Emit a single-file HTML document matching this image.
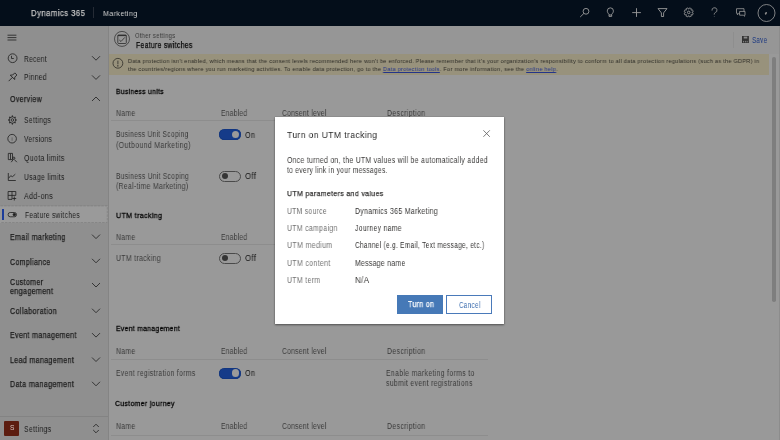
<!DOCTYPE html>
<html><head><meta charset="utf-8">
<style>
*{margin:0;padding:0;box-sizing:border-box}
html,body{width:780px;height:440px;overflow:hidden;background:#999999;font-family:"Liberation Sans",sans-serif;-webkit-font-smoothing:antialiased}
.t{position:absolute;white-space:nowrap;line-height:1;transform-origin:0 0;will-change:transform}
.b{position:absolute}
svg{position:absolute;overflow:visible}
.tog{position:absolute;width:22px;height:11px;border-radius:5.5px}
.on{background:#153b89;box-shadow:inset 0 0 0 0.6px #10337a}
.on::after{content:"";position:absolute;left:12.5px;top:1.8px;width:7.6px;height:7.6px;border-radius:50%;background:#9a9a9a}
.off{border:0.8px solid #4a4a4a}
.off::after{content:"";position:absolute;left:2px;top:1.9px;width:6px;height:6px;border-radius:50%;background:#353535}
.sep{position:absolute;left:111px;width:377px;height:1px;background:#8d8d8d}
</style></head><body>
<!-- top bar -->
<div class="b" style="left:0;top:0;width:780px;height:25.6px;background:#040e1a"></div>
<div class="b" style="left:93.4px;top:7.2px;width:1px;height:10.6px;background:#252b35"></div>
<svg style="left:0;top:0" width="780" height="26" fill="none" stroke="#9c9c9c" stroke-width="0.9">
 <circle cx="586" cy="11.3" r="2.9"/><path d="M583.9 13.4 L580.2 17"/>
 <path d="M609 14.3 C607.8 13 607.3 12 607.3 10.9 A3.05 3.05 0 0 1 613.4 10.9 C613.4 12 612.9 13 611.7 14.3 L611.7 16.4 L609 16.4 Z M609 15 H611.7"/>
 <path d="M636.5 8.2 V16.9 M632.2 12.6 H640.9"/>
 <path d="M658 8.6 H667 L663.6 12.9 V16.5 L661.4 16.5 V12.9 Z"/>
 <circle cx="688.7" cy="12.4" r="1.3"/>
 <path d="M691.90 12.50 L693.23 13.19 L692.46 15.05 L691.04 14.59 L690.89 14.74 L691.35 16.16 L689.49 16.93 L688.80 15.60 L688.60 15.60 L687.91 16.93 L686.05 16.16 L686.51 14.74 L686.36 14.59 L684.94 15.05 L684.17 13.19 L685.50 12.50 L685.50 12.30 L684.17 11.61 L684.94 9.75 L686.36 10.21 L686.51 10.06 L686.05 8.64 L687.91 7.87 L688.60 9.20 L688.80 9.20 L689.49 7.87 L691.35 8.64 L690.89 10.06 L691.04 10.21 L692.46 9.75 L693.23 11.61 L691.90 12.30 Z" stroke-width="0.75"/>
 <path d="M712 10.6 A2.5 2.5 0 1 1 715.2 12.6 C714.5 13 714.2 13.5 714.2 14.6" stroke-width="0.8"/><circle cx="714.2" cy="16.3" r="0.4" fill="#9c9c9c" stroke="none"/>
 <path d="M736.5 8.7 H744 V13.3 H738.8 L737.4 14.8 V13.3 H736.5 Z" stroke-width="0.8"/>
 <path d="M739.6 11.4 H745 V15.2 H744.6 V16.3 L743.3 15.2 H739.6 Z" fill="#040e1a" stroke-width="0.8"/>
 <circle cx="766.5" cy="13" r="8.5" stroke-width="0.8"/>
 <ellipse cx="765.9" cy="13.3" rx="0.9" ry="1.5" transform="rotate(30 765.9 13.3)" fill="#8a8a8a" stroke="none"/>
</svg>
<!-- sidebar -->
<div class="b" style="left:0;top:25.6px;width:108px;height:415px;background:#8f8f8f"></div>
<div class="b" style="left:108px;top:25.6px;width:1px;height:415px;background:#848484"></div>
<div class="b" style="left:0;top:205.7px;width:107.7px;height:17px;background:#9a9a9a"></div>
<svg style="left:0;top:0" width="109" height="440" fill="none" stroke="#787878" stroke-width="0.6">
 <path d="M0.5 205.9 H107.3 V222.5 H0.5" stroke-dasharray="2.6 1"/>
</svg>
<div class="b" style="left:1.9px;top:209px;width:2.2px;height:10.8px;background:#1c3c9a"></div>
<svg style="left:0;top:0" width="109" height="440" fill="none" stroke="#1e1e1e" stroke-width="0.8">
 <path d="M7.5 35.2 H16.4 M7.5 37.6 H16.4 M7.5 40 H16.4"/>
 <circle cx="12.6" cy="58.2" r="4.4"/><path d="M11.5 55.8 V58.5 H13.8"/>
 <g transform="translate(12.6,77.2) rotate(45)"><path d="M-1.5 -4.6 H1.5 V-1.6 L3.1 0.2 H-3.1 L-1.5 -1.6 Z"/><path d="M0 0.2 V5.6"/></g>
 <path d="M92 56.2 L96 60.2 L100 56.2 M92 75.4 L96 79.4 L100 75.4"/>
 <path d="M92 101 L96 97 L100 101"/>
 <circle cx="12.4" cy="120" r="3.2"/><circle cx="12.4" cy="120" r="1.3"/>
 <path d="M12.4 115.6 V116.8 M12.4 123.2 V124.4 M8 120 H9.2 M15.6 120 H16.8 M9.3 116.9 L10.1 117.7 M14.7 122.3 L15.5 123.1 M9.3 123.1 L10.1 122.3 M14.7 117.7 L15.5 116.9" stroke-width="1.2"/>
 <circle cx="12.1" cy="138.7" r="4.3"/><path d="M12.1 137.4 V140.8" stroke="#555" stroke-width="0.7"/>
 <path d="M8.3 153.4 H12.5 V159.6 H8.3 Z M10.5 153.6 V159.4"/>
 <circle cx="13.8" cy="158.2" r="1.1"/><path d="M11.2 162.2 L13.2 159.6 M14.4 159.6 L16.9 162.2"/>
 <path d="M8.3 173 V180.5 H15.8 M8.7 178.2 L10.6 175.8 L12.6 176.6 L15.3 174.2"/>
 <path d="M8.1 191.5 H15.8 V195.4 M8.1 191.5 V199.4 H12 M8.1 195.4 H15.8 M12 191.5 V199.4 M14.3 196.5 V200.5 M12.4 198.5 H16.2"/>
 <rect x="8.1" y="212.5" width="8.4" height="4.3" rx="2.1"/><circle cx="14.3" cy="214.6" r="1.2" fill="#1e1e1e"/>
 <path d="M92 234.6 L96 238.6 L100 234.6 M92 258.8 L96 262.8 L100 258.8 M92 283 L96 287 L100 283 M92 308.7 L96 312.7 L100 308.7 M92 333.1 L96 337.1 L100 333.1 M92 357.5 L96 361.5 L100 357.5 M92 381.8 L96 385.8 L100 381.8"/>
 <path d="M93.2 427 L96 424.2 L98.8 427 M93.2 430 L96 432.8 L98.8 430"/>
</svg>
<div class="b" style="left:0;top:415.5px;width:108px;height:1px;background:#838383"></div>
<div class="b" style="left:4.3px;top:421px;width:15px;height:14.8px;background:#5c1d10;border-radius:1px"></div>
<div class="t" style="left:9.8px;top:425.2px;font-size:6.6px;color:#d8c8c4">S</div>
<!-- header -->
<div class="b" style="left:109px;top:25.6px;width:671px;height:28.2px;background:#969696"></div>
<svg style="left:0;top:0" width="780" height="60" fill="none" stroke="#2a2a2a" stroke-width="0.7">
 <circle cx="122" cy="38.9" r="7.5"/>
 <rect x="117.8" y="35" width="8.5" height="8.5" rx="0.8" stroke-width="0.8"/><path d="M117.8 35.6 H126.3" stroke-width="1"/>
 <path d="M119.3 40 L121 41.5 L124.8 37.4" stroke-width="0.8"/>
</svg>
<div class="b" style="left:732.8px;top:32.3px;width:1px;height:15.6px;background:#8e8e8e"></div>
<svg style="left:0;top:0" width="780" height="60">
 <rect x="742" y="36" width="6.9" height="7" fill="#333"/>
 <rect x="743.7" y="36.6" width="3.6" height="1.9" fill="#8a8a8a"/>
 <rect x="743.1" y="40.9" width="0.9" height="1.5" fill="#8a8a8a"/><rect x="744.9" y="40.9" width="0.9" height="1.5" fill="#8a8a8a"/><rect x="746.7" y="40.9" width="0.9" height="1.5" fill="#8a8a8a"/>
</svg>
<!-- banner -->
<div class="b" style="left:109px;top:53.8px;width:660px;height:20.8px;background:#98927c"></div>
<svg style="left:0;top:0" width="780" height="80" fill="none" stroke="#2e2d28" stroke-width="0.8">
 <circle cx="117.9" cy="63.3" r="4.9"/><path d="M117.9 60.6 V64.3"/><circle cx="117.9" cy="65.9" r="0.3" fill="#2e2d28"/>
</svg>
<!-- scrollbar -->
<div class="b" style="left:778.6px;top:25.6px;width:1.4px;height:415px;background:#8c8c8c"></div>
<div class="b" style="left:772.3px;top:57px;width:3.6px;height:245px;background:#7e7e7e;border-radius:1.8px"></div>
<!-- table separators -->
<div class="sep" style="top:120px"></div>
<div class="sep" style="top:244px"></div>
<div class="sep" style="top:359.4px"></div>
<div class="sep" style="top:435.2px"></div>
<!-- toggles -->
<div class="tog on" style="left:219.2px;top:128.9px"></div>
<div class="tog off" style="left:219.2px;top:170.6px"></div>
<div class="tog off" style="left:219.2px;top:252.6px"></div>
<div class="tog on" style="left:219.2px;top:367.7px"></div>
<div class="t" style="left:30.90px;top:8.84px;font-size:9.286px;font-weight:normal;-webkit-text-stroke:0.25px #c2c2c2;color:#c2c2c2;letter-spacing:0.05em;transform:scaleX(0.8445);">Dynamics 365</div>
<div class="t" style="left:102.90px;top:9.63px;font-size:8.000px;font-weight:normal;color:#d0d0d0;letter-spacing:0.05em;transform:scaleX(0.8924);">Marketing</div>
<div class="t" style="left:24.40px;top:54.87px;font-size:8.429px;font-weight:normal;color:#1c1c1c;letter-spacing:0.05em;transform:scaleX(0.7843);">Recent</div>
<div class="t" style="left:24.40px;top:73.47px;font-size:8.429px;font-weight:normal;color:#1c1c1c;letter-spacing:0.05em;transform:scaleX(0.7971);">Pinned</div>
<div class="t" style="left:9.80px;top:94.77px;font-size:8.429px;font-weight:normal;-webkit-text-stroke:0.25px #1c1c1c;color:#1c1c1c;letter-spacing:0.05em;transform:scaleX(0.8325);">Overview</div>
<div class="t" style="left:24.20px;top:115.87px;font-size:8.429px;font-weight:normal;color:#1c1c1c;letter-spacing:0.05em;transform:scaleX(0.8053);">Settings</div>
<div class="t" style="left:24.40px;top:134.97px;font-size:8.429px;font-weight:normal;color:#1c1c1c;letter-spacing:0.05em;transform:scaleX(0.7880);">Versions</div>
<div class="t" style="left:24.10px;top:153.67px;font-size:8.429px;font-weight:normal;color:#1c1c1c;letter-spacing:0.05em;transform:scaleX(0.8243);">Quota limits</div>
<div class="t" style="left:24.30px;top:172.87px;font-size:8.429px;font-weight:normal;color:#1c1c1c;letter-spacing:0.05em;transform:scaleX(0.7994);">Usage limits</div>
<div class="t" style="left:24.30px;top:191.77px;font-size:8.429px;font-weight:normal;color:#1c1c1c;letter-spacing:0.05em;transform:scaleX(0.8460);">Add-ons</div>
<div class="t" style="left:24.50px;top:210.77px;font-size:8.429px;font-weight:normal;color:#1c1c1c;letter-spacing:0.05em;transform:scaleX(0.7811);">Feature switches</div>
<div class="t" style="left:9.80px;top:233.07px;font-size:8.429px;font-weight:normal;-webkit-text-stroke:0.25px #1c1c1c;color:#1c1c1c;letter-spacing:0.05em;transform:scaleX(0.8353);">Email marketing</div>
<div class="t" style="left:9.80px;top:257.57px;font-size:8.429px;font-weight:normal;-webkit-text-stroke:0.25px #1c1c1c;color:#1c1c1c;letter-spacing:0.05em;transform:scaleX(0.8344);">Compliance</div>
<div class="t" style="left:9.80px;top:277.57px;font-size:8.429px;font-weight:normal;-webkit-text-stroke:0.25px #1c1c1c;color:#1c1c1c;letter-spacing:0.05em;transform:scaleX(0.8383);">Customer</div>
<div class="t" style="left:9.80px;top:287.17px;font-size:8.429px;font-weight:normal;-webkit-text-stroke:0.25px #1c1c1c;color:#1c1c1c;letter-spacing:0.05em;transform:scaleX(0.8488);">engagement</div>
<div class="t" style="left:9.80px;top:306.97px;font-size:8.429px;font-weight:normal;-webkit-text-stroke:0.25px #1c1c1c;color:#1c1c1c;letter-spacing:0.05em;transform:scaleX(0.8534);">Collaboration</div>
<div class="t" style="left:9.80px;top:331.37px;font-size:8.429px;font-weight:normal;-webkit-text-stroke:0.25px #1c1c1c;color:#1c1c1c;letter-spacing:0.05em;transform:scaleX(0.8374);">Event management</div>
<div class="t" style="left:9.80px;top:355.57px;font-size:8.429px;font-weight:normal;-webkit-text-stroke:0.25px #1c1c1c;color:#1c1c1c;letter-spacing:0.05em;transform:scaleX(0.8387);">Lead management</div>
<div class="t" style="left:9.80px;top:379.97px;font-size:8.429px;font-weight:normal;-webkit-text-stroke:0.25px #1c1c1c;color:#1c1c1c;letter-spacing:0.05em;transform:scaleX(0.8492);">Data management</div>
<div class="t" style="left:23.50px;top:424.97px;font-size:8.429px;font-weight:normal;color:#1c1c1c;letter-spacing:0.05em;transform:scaleX(0.8172);">Settings</div>
<div class="t" style="left:135.30px;top:31.87px;font-size:7.000px;font-weight:normal;color:#3c3c3c;letter-spacing:0.05em;transform:scaleX(0.8311);">Other settings</div>
<div class="t" style="left:135.60px;top:40.87px;font-size:8.429px;font-weight:normal;-webkit-text-stroke:0.25px #080808;color:#080808;letter-spacing:0.05em;transform:scaleX(0.8054);">Feature switches</div>
<div class="t" style="left:751.80px;top:35.97px;font-size:8.429px;font-weight:normal;color:#1a3780;letter-spacing:0.05em;transform:scaleX(0.7374);">Save</div>
<div class="t" style="left:127.90px;top:57.82px;font-size:6.000px;font-weight:normal;color:#2c2b26;letter-spacing:0.05em;transform:scaleX(0.9214);">Data protection isn't enabled, which means that the consent levels recommended here won't be enforced. Please remember that it's your organization's responsibility to conform to all data protection regulations (such as the GDPR) in</div>
<div class="t" style="left:127.90px;top:66.12px;font-size:6.000px;font-weight:normal;color:#2c2b26;letter-spacing:0.05em;transform:scaleX(0.9255);">the countries/regions where you run marketing activities. To enable data protection, go to the <u style="color:#23348a;text-decoration-thickness:0.6px">Data protection tools</u>. For more information, see the <u style="color:#23348a;text-decoration-thickness:0.6px">online help</u>.</div>
<div class="t" style="left:115.60px;top:87.97px;font-size:7.714px;font-weight:normal;-webkit-text-stroke:0.28px #050505;color:#050505;letter-spacing:0.05em;transform:scaleX(0.8712);">Business units</div>
<div class="t" style="left:115.80px;top:108.80px;font-size:8.500px;font-weight:normal;color:#3a3a3a;letter-spacing:0.05em;transform:scaleX(0.8017);">Name</div>
<div class="t" style="left:220.60px;top:108.80px;font-size:8.500px;font-weight:normal;color:#3a3a3a;letter-spacing:0.05em;transform:scaleX(0.7734);">Enabled</div>
<div class="t" style="left:282.00px;top:108.80px;font-size:8.500px;font-weight:normal;color:#3a3a3a;letter-spacing:0.05em;transform:scaleX(0.7826);">Consent level</div>
<div class="t" style="left:386.90px;top:108.80px;font-size:8.500px;font-weight:normal;color:#3a3a3a;letter-spacing:0.05em;transform:scaleX(0.8147);">Description</div>
<div class="t" style="left:115.90px;top:130.30px;font-size:8.500px;font-weight:normal;color:#3a3a3a;letter-spacing:0.05em;transform:scaleX(0.7729);">Business Unit Scoping</div>
<div class="t" style="left:115.90px;top:141.20px;font-size:8.500px;font-weight:normal;color:#3a3a3a;letter-spacing:0.05em;transform:scaleX(0.8198);">(Outbound Marketing)</div>
<div class="t" style="left:245.00px;top:130.60px;font-size:8.500px;font-weight:normal;color:#141414;letter-spacing:0.05em;transform:scaleX(0.8500);">On</div>
<div class="t" style="left:115.80px;top:172.00px;font-size:8.500px;font-weight:normal;color:#3a3a3a;letter-spacing:0.05em;transform:scaleX(0.7772);">Business Unit Scoping</div>
<div class="t" style="left:115.80px;top:182.20px;font-size:8.500px;font-weight:normal;color:#3a3a3a;letter-spacing:0.05em;transform:scaleX(0.7992);">(Real-time Marketing)</div>
<div class="t" style="left:244.60px;top:172.00px;font-size:8.500px;font-weight:normal;color:#141414;letter-spacing:0.05em;transform:scaleX(0.9143);">Off</div>
<div class="t" style="left:115.80px;top:211.97px;font-size:7.714px;font-weight:normal;-webkit-text-stroke:0.28px #050505;color:#050505;letter-spacing:0.05em;transform:scaleX(0.9200);">UTM tracking</div>
<div class="t" style="left:115.80px;top:232.80px;font-size:8.500px;font-weight:normal;color:#3a3a3a;letter-spacing:0.05em;transform:scaleX(0.8017);">Name</div>
<div class="t" style="left:220.60px;top:232.80px;font-size:8.500px;font-weight:normal;color:#3a3a3a;letter-spacing:0.05em;transform:scaleX(0.7734);">Enabled</div>
<div class="t" style="left:282.00px;top:232.80px;font-size:8.500px;font-weight:normal;color:#3a3a3a;letter-spacing:0.05em;transform:scaleX(0.7826);">Consent level</div>
<div class="t" style="left:386.90px;top:232.80px;font-size:8.500px;font-weight:normal;color:#3a3a3a;letter-spacing:0.05em;transform:scaleX(0.8147);">Description</div>
<div class="t" style="left:115.80px;top:254.00px;font-size:8.500px;font-weight:normal;color:#3a3a3a;letter-spacing:0.05em;transform:scaleX(0.8078);">UTM tracking</div>
<div class="t" style="left:244.60px;top:254.00px;font-size:8.500px;font-weight:normal;color:#141414;letter-spacing:0.05em;transform:scaleX(0.9143);">Off</div>
<div class="t" style="left:115.80px;top:325.07px;font-size:7.714px;font-weight:normal;-webkit-text-stroke:0.28px #050505;color:#050505;letter-spacing:0.05em;transform:scaleX(0.8778);">Event management</div>
<div class="t" style="left:115.80px;top:346.90px;font-size:8.500px;font-weight:normal;color:#3a3a3a;letter-spacing:0.05em;transform:scaleX(0.8017);">Name</div>
<div class="t" style="left:220.60px;top:346.90px;font-size:8.500px;font-weight:normal;color:#3a3a3a;letter-spacing:0.05em;transform:scaleX(0.7734);">Enabled</div>
<div class="t" style="left:282.00px;top:346.90px;font-size:8.500px;font-weight:normal;color:#3a3a3a;letter-spacing:0.05em;transform:scaleX(0.7826);">Consent level</div>
<div class="t" style="left:386.90px;top:346.90px;font-size:8.500px;font-weight:normal;color:#3a3a3a;letter-spacing:0.05em;transform:scaleX(0.8147);">Description</div>
<div class="t" style="left:115.80px;top:369.00px;font-size:8.500px;font-weight:normal;color:#3a3a3a;letter-spacing:0.05em;transform:scaleX(0.7957);">Event registration forms</div>
<div class="t" style="left:245.20px;top:369.00px;font-size:8.500px;font-weight:normal;color:#141414;letter-spacing:0.05em;transform:scaleX(0.8500);">On</div>
<div class="t" style="left:385.70px;top:369.10px;font-size:8.500px;font-weight:normal;color:#3a3a3a;letter-spacing:0.05em;transform:scaleX(0.8070);">Enable marketing forms to</div>
<div class="t" style="left:385.70px;top:378.80px;font-size:8.500px;font-weight:normal;color:#3a3a3a;letter-spacing:0.05em;transform:scaleX(0.8048);">submit event registrations</div>
<div class="t" style="left:115.30px;top:399.77px;font-size:7.714px;font-weight:normal;-webkit-text-stroke:0.28px #050505;color:#050505;letter-spacing:0.05em;transform:scaleX(0.8925);">Customer journey</div>
<div class="t" style="left:115.80px;top:422.20px;font-size:8.500px;font-weight:normal;color:#3a3a3a;letter-spacing:0.05em;transform:scaleX(0.8017);">Name</div>
<div class="t" style="left:220.60px;top:422.20px;font-size:8.500px;font-weight:normal;color:#3a3a3a;letter-spacing:0.05em;transform:scaleX(0.7734);">Enabled</div>
<div class="t" style="left:282.00px;top:422.20px;font-size:8.500px;font-weight:normal;color:#3a3a3a;letter-spacing:0.05em;transform:scaleX(0.7826);">Consent level</div>
<div class="t" style="left:386.90px;top:422.20px;font-size:8.500px;font-weight:normal;color:#3a3a3a;letter-spacing:0.05em;transform:scaleX(0.8147);">Description</div>
<!-- modal -->
<div class="b" style="left:275.1px;top:116.5px;width:228.6px;height:207.4px;background:#fff;box-shadow:0 0.8px 2px rgba(0,0,0,0.45),0 0 1px rgba(0,0,0,0.3)"></div>
<svg style="left:0;top:0" width="780" height="440" fill="none" stroke="#5a5a5a" stroke-width="0.8">
 <path d="M483.4 130.3 L489.8 136.8 M489.8 130.3 L483.4 136.8"/>
</svg>
<div class="b" style="left:397px;top:295px;width:45.8px;height:18.9px;background:#4679b7"></div>
<div class="b" style="left:446.1px;top:295px;width:45.8px;height:18.9px;background:#fff;border:1px solid #4a7aba"></div>
<div class="t" style="left:287.20px;top:129.96px;font-size:9.857px;font-weight:normal;color:#262626;letter-spacing:0.05em;transform:scaleX(0.8638);">Turn on UTM tracking</div>
<div class="t" style="left:287.20px;top:156.04px;font-size:8.571px;font-weight:normal;color:#3a3938;letter-spacing:0.05em;transform:scaleX(0.7933);">Once turned on, the UTM values will be automatically added</div>
<div class="t" style="left:287.20px;top:166.14px;font-size:8.571px;font-weight:normal;color:#3a3938;letter-spacing:0.05em;transform:scaleX(0.7700);">to every link in your messages.</div>
<div class="t" style="left:286.60px;top:189.73px;font-size:8.000px;font-weight:normal;-webkit-text-stroke:0.25px #323130;color:#323130;letter-spacing:0.05em;transform:scaleX(0.8704);">UTM parameters and values</div>
<div class="t" style="left:286.60px;top:206.54px;font-size:8.571px;font-weight:normal;color:#707070;letter-spacing:0.05em;transform:scaleX(0.7837);">UTM source</div>
<div class="t" style="left:354.80px;top:206.54px;font-size:8.571px;font-weight:normal;color:#323130;letter-spacing:0.05em;transform:scaleX(0.8004);">Dynamics 365 Marketing</div>
<div class="t" style="left:286.60px;top:224.04px;font-size:8.571px;font-weight:normal;color:#707070;letter-spacing:0.05em;transform:scaleX(0.8022);">UTM campaign</div>
<div class="t" style="left:354.80px;top:224.04px;font-size:8.571px;font-weight:normal;color:#323130;letter-spacing:0.05em;transform:scaleX(0.7877);">Journey name</div>
<div class="t" style="left:286.60px;top:241.44px;font-size:8.571px;font-weight:normal;color:#707070;letter-spacing:0.05em;transform:scaleX(0.8175);">UTM medium</div>
<div class="t" style="left:354.80px;top:241.44px;font-size:8.571px;font-weight:normal;color:#323130;letter-spacing:0.05em;transform:scaleX(0.7559);">Channel (e.g. Email, Text message, etc.)</div>
<div class="t" style="left:286.60px;top:258.94px;font-size:8.571px;font-weight:normal;color:#707070;letter-spacing:0.05em;transform:scaleX(0.8116);">UTM content</div>
<div class="t" style="left:354.80px;top:258.94px;font-size:8.571px;font-weight:normal;color:#323130;letter-spacing:0.05em;transform:scaleX(0.7944);">Message name</div>
<div class="t" style="left:286.60px;top:276.24px;font-size:8.571px;font-weight:normal;color:#707070;letter-spacing:0.05em;transform:scaleX(0.8055);">UTM term</div>
<div class="t" style="left:354.80px;top:276.24px;font-size:8.571px;font-weight:normal;color:#323130;letter-spacing:0.05em;transform:scaleX(0.9243);">N/A</div>
<div class="t" style="left:408.10px;top:300.59px;font-size:8.286px;font-weight:normal;-webkit-text-stroke:0.25px #ffffff;color:#ffffff;letter-spacing:0.05em;transform:scaleX(0.8460);">Turn on</div>
<div class="t" style="left:458.70px;top:300.74px;font-size:8.571px;font-weight:normal;color:#3f6fb0;letter-spacing:0.05em;transform:scaleX(0.7390);">Cancel</div>
</body></html>
